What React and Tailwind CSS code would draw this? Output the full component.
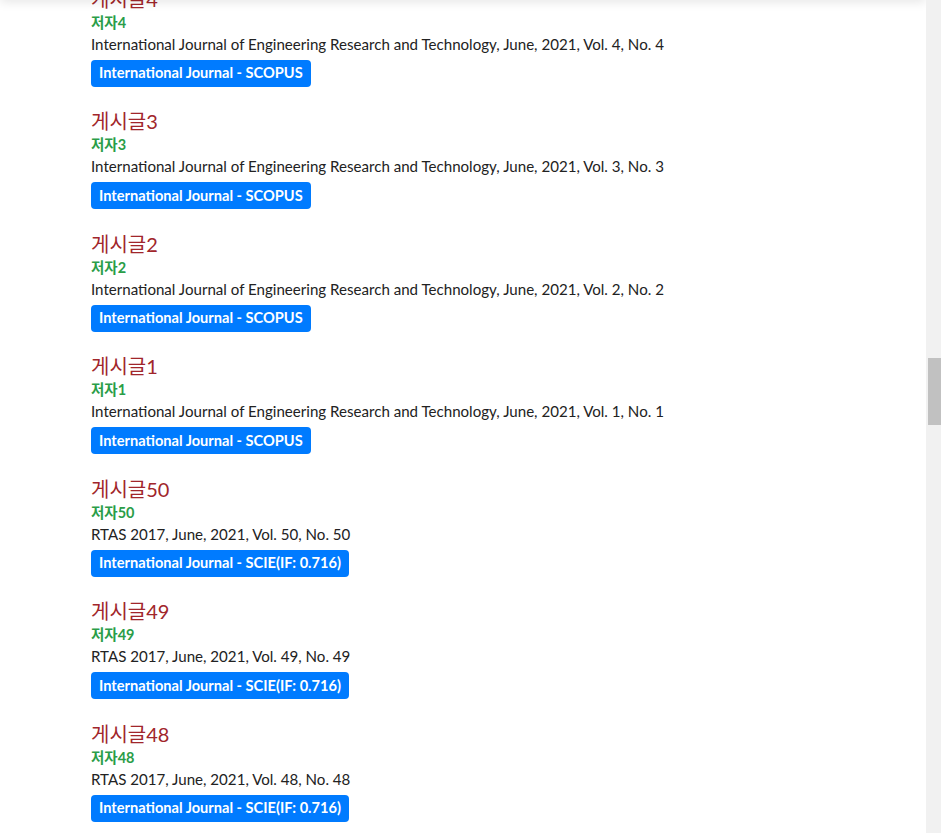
const papers = [
  { no: 4, journal: 'International Journal of Engineering Research and Technology', tag: 'International Journal - SCOPUS' },
  { no: 3, journal: 'International Journal of Engineering Research and Technology', tag: 'International Journal - SCOPUS' },
  { no: 2, journal: 'International Journal of Engineering Research and Technology', tag: 'International Journal - SCOPUS' },
  { no: 1, journal: 'International Journal of Engineering Research and Technology', tag: 'International Journal - SCOPUS' },
  { no: 50, journal: 'RTAS 2017', tag: 'International Journal - SCIE(IF: 0.716)' },
  { no: 49, journal: 'RTAS 2017', tag: 'International Journal - SCIE(IF: 0.716)' },
  { no: 48, journal: 'RTAS 2017', tag: 'International Journal - SCIE(IF: 0.716)' },
]

function Paper({ p }) {
  return (
    <div className="mb-[20.5px]">
      <div className="text-[20px] leading-[28px] text-[#a1262b]">게시글{p.no}</div>
      <div className="text-[14.5px] leading-[20px] font-bold text-[#2a9d48]">저자{p.no}</div>
      <div className="text-[15.1px] leading-[22px] text-[#222]">
        {p.journal}, June, 2021, Vol. {p.no}, No. {p.no}
      </div>
      <div className="mt-[5px] flex">
        <span className="h-[27px] px-[8px] flex items-center rounded-[4px] bg-[#007bff] text-white text-[14.6px] font-bold">
          {p.tag}
        </span>
      </div>
    </div>
  )
}

export default function App() {
  return (
    <div className="w-[941px] h-[833px] overflow-hidden flex bg-white font-['Lato','Noto_Sans_CJK_KR',sans-serif]">
      <div className="flex-1 relative overflow-hidden">
        <div className="pl-[91px] -mt-[15.5px]">
          {papers.map(p => <Paper key={p.no} p={p} />)}
        </div>
        <div className="absolute left-0 right-0 -top-[60px] h-[60px] bg-white shadow-[0_2px_10px_rgba(0,0,0,0.10)]" />
      </div>
      <div className="w-[15px] bg-[#f1f1f1] flex flex-col">
        <div className="mt-[358px] ml-[2px] h-[67px] bg-[#c1c1c1]" />
      </div>
    </div>
  )
}
